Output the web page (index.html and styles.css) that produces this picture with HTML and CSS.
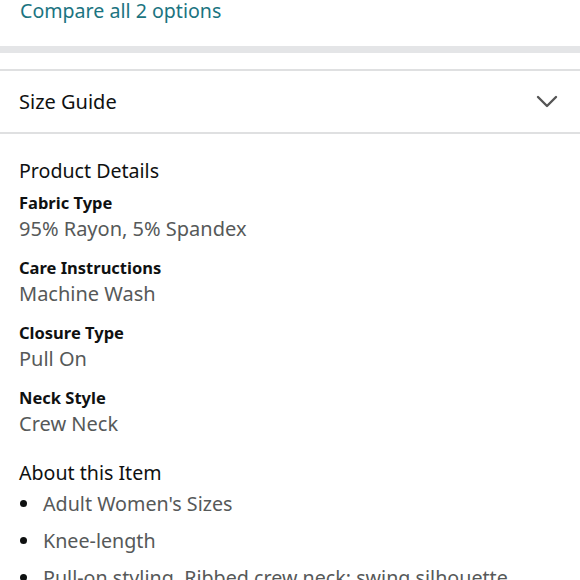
FILE: index.html
```html
<!DOCTYPE html>
<html>
<head>
<meta charset="utf-8">
<link rel="stylesheet" href="styles.css">
</head>
<body>
<div class="compare"><span class="compare-link">Compare all 2 options</span></div>
<div class="gray-bar"></div>
<div class="spacer"></div>
<div class="size-guide">
  <span class="size-title">Size Guide</span>
  <svg class="chevron" width="22" height="14" viewBox="0 0 22 14"><path d="M2 2 L11 11 L20 2" fill="none" stroke="#555" stroke-width="2.4" stroke-linecap="round" stroke-linejoin="round"/></svg>
</div>
<div class="details">
  <div class="heading">Product Details</div>
  <div class="attr">
    <div class="label">Fabric Type</div>
    <div class="value">95% Rayon, 5% Spandex</div>
  </div>
  <div class="attr">
    <div class="label">Care Instructions</div>
    <div class="value">Machine Wash</div>
  </div>
  <div class="attr">
    <div class="label">Closure Type</div>
    <div class="value">Pull On</div>
  </div>
  <div class="attr">
    <div class="label">Neck Style</div>
    <div class="value">Crew Neck</div>
  </div>
  <div class="heading about">About this Item</div>
  <ul class="bullets">
    <li>Adult Women's Sizes</li>
    <li>Knee-length</li>
    <li>Pull-on styling. Ribbed crew neck; swing silhouette</li>
  </ul>
</div>
</body>
</html>
```
FILE: styles.css
```css
html, body {
  margin: 0;
  padding: 0;
  background: #ffffff;
  font-family: "Noto Sans", "Open Sans", sans-serif;
  color: #0f1111;
  overflow: hidden;
}
.compare {
  height: 46px;
  box-sizing: border-box;
  padding: 1px 0 0 20px;
}
.compare-link {
  display: block;
  font-size: 19.6px;
  line-height: 20px;
  color: #1b7481;
}
.gray-bar {
  height: 7px;
  background: #e4e5e7;
}
.spacer {
  height: 16px;
}
.size-guide {
  height: 61px;
  border-top: 2px solid #dfe0e1;
  border-bottom: 2px solid #dfe0e1;
  display: flex;
  align-items: center;
  justify-content: space-between;
  padding: 0 22px 0 19px;
}
.size-title {
  font-size: 20px;
  line-height: 28px;
  color: #0f1111;
}
.chevron {
  display: block;
}
.details {
  padding: 23px 19px 0 19px;
}
.heading {
  font-size: 19.6px;
  line-height: 28px;
  color: #0f1111;
}
.attr {
  margin-bottom: 13px;
}
.heading + .attr {
  margin-top: 6px;
}
.label {
  font-size: 16.5px;
  font-weight: bold;
  line-height: 24px;
  color: #0f1111;
}
.value {
  font-size: 20px;
  line-height: 28px;
  color: #565959;
}
.about {
  margin-top: 21px;
}
.bullets {
  list-style: none;
  margin: 3px 0 0 0;
  padding: 0;
}
.bullets li {
  position: relative;
  padding-left: 24px;
  font-size: 19.7px;
  line-height: 28px;
  color: #565959;
  margin-bottom: 9px;
  white-space: nowrap;
}
.bullets li::before {
  content: "";
  position: absolute;
  left: 1px;
  top: 10px;
  width: 7px;
  height: 7px;
  border-radius: 50%;
  background: #0f1111;
}
```
